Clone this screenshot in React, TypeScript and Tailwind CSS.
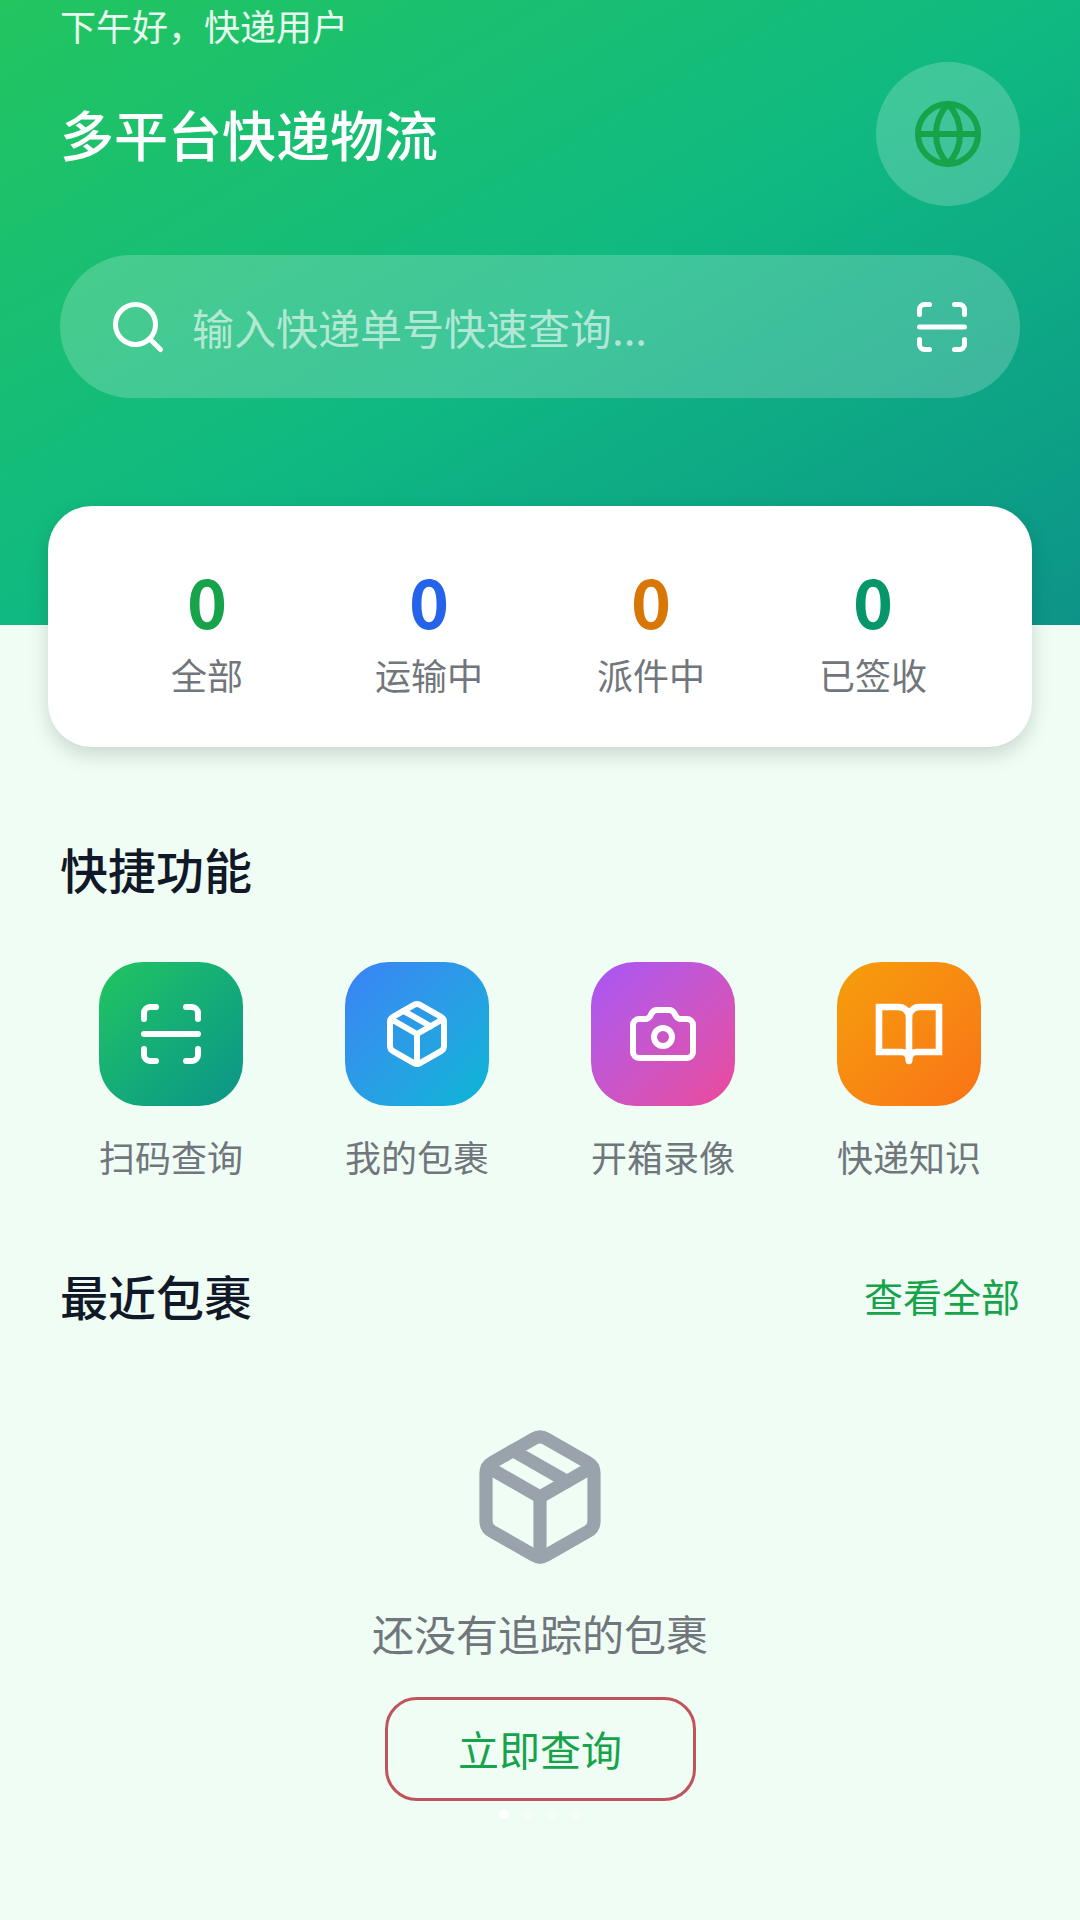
import { Camera, Globe, Package, Search } from "lucide-react"

const cjk = { fontFamily: '"Noto Sans CJK SC", "Noto Sans", sans-serif' }

const stats = [
  { label: "全部", color: "text-[#16a34a]" },
  { label: "运输中", color: "text-[#2563eb]" },
  { label: "派件中", color: "text-[#d97706]" },
  { label: "已签收", color: "text-[#059669]" },
]

function ScanIcon({ className }: { className?: string }) {
  return (
    <svg viewBox="0 0 24 24" fill="none" stroke="currentColor" strokeWidth={2} strokeLinecap="round" strokeLinejoin="round" className={className}>
      <path d="M3 7V5a2 2 0 0 1 2-2h2" />
      <path d="M17 3h2a2 2 0 0 1 2 2v2" />
      <path d="M21 17v2a2 2 0 0 1-2 2h-2" />
      <path d="M7 21H5a2 2 0 0 1-2-2v-2" />
      <path d="M3 12h18" />
    </svg>
  )
}

function BookIcon({ className }: { className?: string }) {
  return (
    <svg viewBox="0 0 24 24" fill="none" stroke="currentColor" strokeWidth={2.2} strokeLinecap="round" className={className}>
      <path d="M2 3h6.500c1.700 0 3.500 1.200 3.500 3.500 0-2.300 1.800-3.500 3.500-3.500H22v15h-7.500c-1.200 0-2.500 1-2.500 3 0-2-1.300-3-2.500-3H2z" />
      <path d="M12 6.500V21" />
    </svg>
  )
}

const actions = [
  { label: "扫码查询", bg: "bg-gradient-to-br from-[#22c55e] to-[#0d9488]", icon: <ScanIcon className="h-[72px] w-[72px]" /> },
  { label: "我的包裹", bg: "bg-gradient-to-br from-[#3b82f6] to-[#06b6d4]", icon: <Package className="h-[72px] w-[72px]" /> },
  { label: "开箱录像", bg: "bg-gradient-to-br from-[#a855f7] to-[#ec4899]", icon: <Camera className="h-[72px] w-[72px]" /> },
  { label: "快递知识", bg: "bg-gradient-to-br from-[#f59e0b] to-[#f97316]", icon: <BookIcon className="h-[72px] w-[72px]" /> },
]

export default function App() {
  return (
    <div style={cjk} className="relative h-[1920px] w-[1080px] overflow-hidden bg-[#effdf5]">
      {/* Header */}
      <div className="h-[625px] bg-gradient-to-br from-[#22c55e] via-[#10b981] to-[#0d9488] px-[60px] text-white">
        <p className="pt-[1px] pb-[1px] text-[36px] leading-[48px] text-white/90">下午好，快递用户</p>
        <div className="mt-[12px] flex h-[144px] items-center justify-between">
          <h1 className="pb-[2px] text-[54px] font-medium">多平台快递物流</h1>
          <div className="flex h-[144px] w-[144px] items-center justify-center rounded-full bg-white/20 text-[#16a34a]">
            <Globe className="h-[72px] w-[72px]" />
          </div>
        </div>
        <div className="mt-[49px] flex h-[143px] items-center rounded-full bg-white/20 pl-[48px] pr-[48px]">
          <Search className="h-[60px] w-[60px] shrink-0" />
          <span className="ml-[24px] flex-1 text-[42px] text-white/60">输入快递单号快速查询...</span>
          <ScanIcon className="h-[60px] w-[60px]" />
        </div>
      </div>

      {/* Stats card, overlaps the header */}
      <div className="mx-12 -mt-[119px] grid h-[241px] grid-cols-4 items-center rounded-[44px] bg-white px-12 pt-[7px] shadow-[0_8px_20px_rgba(0,0,0,0.15)]">
        {stats.map((s) => (
          <div key={s.label} className="flex flex-col items-center">
            <span className={`text-[68px] font-bold leading-[76px] ${s.color}`}>0</span>
            <span className="mt-[11px] text-[36px] leading-[50px] text-[#70767c]">{s.label}</span>
          </div>
        ))}
      </div>

      {/* Quick actions */}
      <h2 className="mt-[89px] px-[60px] text-[48px] font-medium leading-[64px] text-[#111827]">快捷功能</h2>
      <div className="mx-12 mt-[62px] grid grid-cols-4">
        {actions.map((a) => (
          <div key={a.label} className="flex flex-col items-center">
            <div className={`flex h-[144px] w-[144px] items-center justify-center rounded-[44px] text-white ${a.bg}`}>{a.icon}</div>
            <span className="mt-[25px] text-[36px] leading-[50px] text-[#70767c]">{a.label}</span>
          </div>
        ))}
      </div>

      {/* Recent packages */}
      <div className="mt-[82px] flex items-center justify-between px-[60px]">
        <h2 className="text-[48px] font-medium leading-[64px] text-[#111827]">最近包裹</h2>
        <span className="text-[39px] text-[#16a34a]">查看全部</span>
      </div>
      <div className="mt-[98px] flex flex-col items-center">
        <Package strokeWidth={2.2} className="h-[144px] w-[144px] text-[#9aa3ab]" />
        <p className="mt-[34px] text-[42px] leading-[60px] text-[#70767c]">还没有追踪的包裹</p>
        <button className="mt-[34px] h-[104px] w-[311px] rounded-[32px] border-[3px] border-[#c0545c] text-[41px] text-[#16a34a]">立即查询</button>
        <div className="mt-[8px] flex items-center gap-[14px]">
          <span className="h-[10px] w-[10px] rounded-full bg-white" />
          <span className="h-[10px] w-[10px] rounded-full bg-white/40" />
          <span className="h-[10px] w-[10px] rounded-full bg-white/40" />
          <span className="h-[10px] w-[10px] rounded-full bg-white/40" />
        </div>
      </div>
    </div>
  )
}
